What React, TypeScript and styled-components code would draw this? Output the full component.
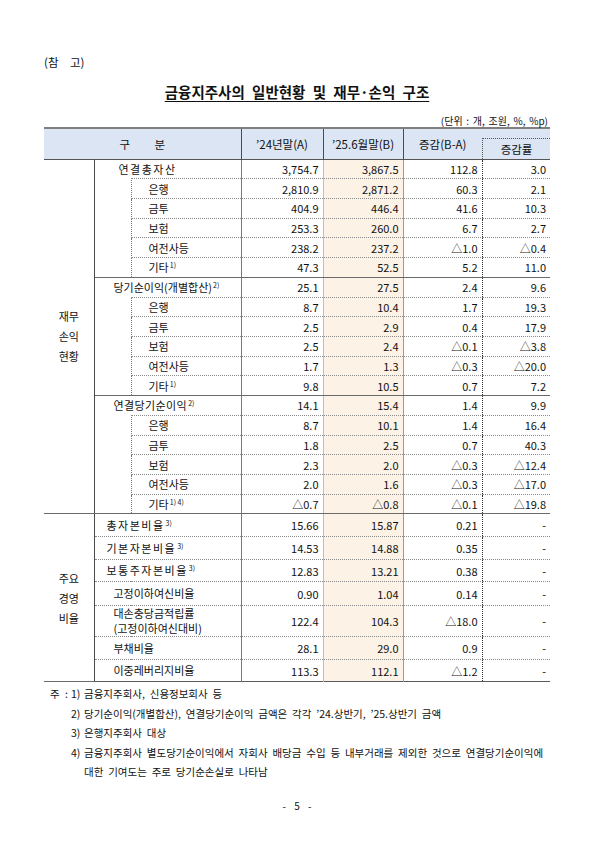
import React from "react";
import styled, { createGlobalStyle } from "styled-components";

const GlobalStyle = createGlobalStyle`
  html, body {
    margin: 0;
    padding: 0;
    background: #fff;
  }
  body {
    font-family: "Noto Sans CJK KR", "Noto Sans", sans-serif;
    color: #111;
  }
`;

const Page = styled.div`
  width: 595px;
  height: 841px;
  box-sizing: border-box;
  padding: 54px 45px 0 44px;
  background: #fff;
`;

const RefLabel = styled.div`
  font-size: 11.5px;
  line-height: 16px;
  word-spacing: 9px;
`;

const Title = styled.h1`
  margin: 12px 0 0;
  font-size: 14.5px;
  line-height: 20px;
  font-weight: 700;
  text-align: center;
  word-spacing: 4px;
  text-decoration: underline;
  text-underline-offset: 3px;
`;

const Unit = styled.div`
  margin-top: 13px;
  padding-right: 2px;
  font-size: 10px;
  line-height: 12px;
  text-align: right;
  word-spacing: 1.5px;
`;

const Table = styled.table`
  width: 506px;
  table-layout: fixed;
  border-collapse: collapse;
  border-top: 2px solid #808080;
  border-bottom: 1px solid #5a5a5a;
  font-size: 11px;
  line-height: 14px;
`;

const Col = styled.col<{ $w: number }>`
  width: ${(p) => p.$w}px;
`;

const HeadRow = styled.tr`
  height: 31px;
`;

const HeadCell = styled.th<{ $first?: boolean }>`
  padding: 0;
  background: #dbe5f3;
  font-weight: 400;
  font-size: 11.5px;
  white-space: nowrap;
  border-bottom: 1px solid #555;
  border-left: ${(p) => (p.$first ? "none" : "1px solid #4a4a4a")};
  word-spacing: ${(p) => (p.$first ? "22px" : "0")};
`;

const RateHead = styled(HeadCell)`
  border-left: none;
  vertical-align: bottom;
`;

const RateBox = styled.div`
  box-sizing: border-box;
  height: 21px;
  line-height: 20px;
  border-top: 1px dotted #555;
  border-left: 1px dotted #555;
`;

const BodyRow = styled.tr<{ $h: number }>`
  height: ${(p) => p.$h}px;
`;

type Line = "dot" | "solid" | "none";

const lineCss = (l: Line) =>
  l === "solid" ? "1px solid #6a6a6a" : l === "dot" ? "1px dotted #8a8a8a" : "none";

const Cat = styled.td`
  padding: 0;
  text-align: center;
  font-size: 11px;
  line-height: 20px;
  border-right: 1px solid #4a4a4a;
  border-bottom: 1px solid #6a6a6a;
`;

const GroupLabel = styled.td<{ $pad: number; $ls: number }>`
  padding: 0 0 0 ${(p) => p.$pad}px;
  white-space: nowrap;
  letter-spacing: ${(p) => p.$ls}px;
  border-bottom: none;
`;

const Indent = styled.td<{ $line: Line }>`
  padding: 0;
  border-bottom: ${(p) => lineCss(p.$line)};
`;

const SubLabel = styled.td<{ $first: boolean; $line: Line }>`
  padding: 0 0 0 17px;
  white-space: nowrap;
  border-left: 1px dotted #777;
  border-top: ${(p) => (p.$first ? "1px dotted #8a8a8a" : "none")};
  border-bottom: ${(p) => lineCss(p.$line)};
`;

const RatioLabel = styled.td<{ $pad: number; $ls: number; $line: Line }>`
  padding: 0 0 0 ${(p) => p.$pad}px;
  white-space: nowrap;
  letter-spacing: ${(p) => p.$ls}px;
  line-height: 15px;
  border-bottom: ${(p) => lineCss(p.$line)};
`;

const colLeft: Record<number, string> = {
  3: "1px solid #7a7a7a",
  4: "1px solid #c8beb0",
  5: "1px solid #9a9a9a",
  6: "1px dotted #333",
};

const NumCell = styled.td<{ $col: number; $line: Line }>`
  padding: 0 4px 0 0;
  text-align: right;
  white-space: nowrap;
  background: ${(p) => (p.$col === 4 ? "#fcf2e5" : "transparent")};
  border-left: ${(p) => colLeft[p.$col]};
  border-bottom: ${(p) => lineCss(p.$line)};
`;

const Sup = styled.sup`
  font-size: 7px;
  line-height: 0;
  vertical-align: 4px;
  letter-spacing: 0;
  margin-left: 1px;
`;

const Notes = styled.div`
  margin-top: 2px;
  font-size: 10.5px;
  line-height: 19.5px;
  word-spacing: 2.5px;
`;

const NoteRow = styled.div`
  display: grid;
  grid-template-columns: 27px 13px 1fr;
  white-space: nowrap;
`;

const NoteHead = styled.span`
  padding-left: 6px;
  word-spacing: 3px;
`;

const PageNum = styled.div`
  margin-top: 17px;
  font-size: 10px;
  line-height: 14px;
  text-align: center;
  word-spacing: 6px;
`;

type Vals = { a: string; b: string; d: string; r: string };
type Item = Vals & { label: string; sup?: string };
type Group = { head: Item; pad: number; ls: number; items: Item[] };
type Ratio = Vals & { label: string[]; sup?: string; pad: number; ls: number; h: number };

const groups: Group[] = [
  {
    head: { label: "연결총자산", a: "3,754.7", b: "3,867.5", d: "112.8", r: "3.0" },
    pad: 24,
    ls: 1.5,
    items: [
      { label: "은행", a: "2,810.9", b: "2,871.2", d: "60.3", r: "2.1" },
      { label: "금투", a: "404.9", b: "446.4", d: "41.6", r: "10.3" },
      { label: "보험", a: "253.3", b: "260.0", d: "6.7", r: "2.7" },
      { label: "여전사등", a: "238.2", b: "237.2", d: "△1.0", r: "△0.4" },
      { label: "기타", sup: "1)", a: "47.3", b: "52.5", d: "5.2", r: "11.0" },
    ],
  },
  {
    head: { label: "당기순이익(개별합산)", sup: "2)", a: "25.1", b: "27.5", d: "2.4", r: "9.6" },
    pad: 19,
    ls: 0,
    items: [
      { label: "은행", a: "8.7", b: "10.4", d: "1.7", r: "19.3" },
      { label: "금투", a: "2.5", b: "2.9", d: "0.4", r: "17.9" },
      { label: "보험", a: "2.5", b: "2.4", d: "△0.1", r: "△3.8" },
      { label: "여전사등", a: "1.7", b: "1.3", d: "△0.3", r: "△20.0" },
      { label: "기타", sup: "1)", a: "9.8", b: "10.5", d: "0.7", r: "7.2" },
    ],
  },
  {
    head: { label: "연결당기순이익", sup: "2)", a: "14.1", b: "15.4", d: "1.4", r: "9.9" },
    pad: 19,
    ls: 0.4,
    items: [
      { label: "은행", a: "8.7", b: "10.1", d: "1.4", r: "16.4" },
      { label: "금투", a: "1.8", b: "2.5", d: "0.7", r: "40.3" },
      { label: "보험", a: "2.3", b: "2.0", d: "△0.3", r: "△12.4" },
      { label: "여전사등", a: "2.0", b: "1.6", d: "△0.3", r: "△17.0" },
      { label: "기타", sup: "1) 4)", a: "△0.7", b: "△0.8", d: "△0.1", r: "△19.8" },
    ],
  },
];

const ratios: Ratio[] = [
  { label: ["총자본비율"], sup: "3)", pad: 12, ls: 1.5, h: 23, a: "15.66", b: "15.87", d: "0.21", r: "-" },
  { label: ["기본자본비율"], sup: "3)", pad: 12, ls: 1.5, h: 23, a: "14.53", b: "14.88", d: "0.35", r: "-" },
  { label: ["보통주자본비율"], sup: "3)", pad: 12, ls: 1.5, h: 22, a: "12.83", b: "13.21", d: "0.38", r: "-" },
  { label: ["고정이하여신비율"], pad: 19, ls: 0, h: 24, a: "0.90", b: "1.04", d: "0.14", r: "-" },
  { label: ["대손충당금적립률", "(고정이하여신대비)"], pad: 19, ls: 0, h: 31, a: "122.4", b: "104.3", d: "△18.0", r: "-" },
  { label: ["부채비율"], pad: 19, ls: 0, h: 23, a: "28.1", b: "29.0", d: "0.9", r: "-" },
  { label: ["이중레버리지비율"], pad: 19, ls: 0, h: 22, a: "113.3", b: "112.1", d: "△1.2", r: "-" },
];

const notes = [
  ["1)", "금융지주회사, 신용정보회사 등"],
  ["2)", "당기순이익(개별합산), 연결당기순이익 금액은 각각 ’24.상반기, ’25.상반기 금액"],
  ["3)", "은행지주회사 대상"],
  ["4)", "금융지주회사 별도당기순이익에서 자회사 배당금 수입 등 내부거래를 제외한 것으로 연결당기순이익에"],
];

const ROW_H = 19.72;

const Nums = ({ v, line }: { v: Vals; line: Line }) => (
  <>
    <NumCell $col={3} $line={line}>{v.a}</NumCell>
    <NumCell $col={4} $line={line}>{v.b}</NumCell>
    <NumCell $col={5} $line={line}>{v.d}</NumCell>
    <NumCell $col={6} $line={line}>{v.r}</NumCell>
  </>
);

export default function App() {
  return (
    <>
      <GlobalStyle />
      <Page>
        <RefLabel>(참 고)</RefLabel>
        <Title>금융지주사의 일반현황 및 재무·손익 구조</Title>
        <Unit>(단위 : 개, 조원, %, %p)</Unit>
        <Table>
          <colgroup>
            <Col $w={50} />
            <Col $w={37} />
            <Col $w={110} />
            <Col $w={82} />
            <Col $w={80} />
            <Col $w={79} />
            <Col $w={68} />
          </colgroup>
          <thead>
            <HeadRow>
              <HeadCell $first colSpan={3}>
                구 분
              </HeadCell>
              <HeadCell>’24년말(A)</HeadCell>
              <HeadCell>’25.6월말(B)</HeadCell>
              <HeadCell>증감(B-A)</HeadCell>
              <RateHead>
                <RateBox>증감률</RateBox>
              </RateHead>
            </HeadRow>
          </thead>
          <tbody>
            {groups.map((g, gi) => (
              <React.Fragment key={gi}>
                <BodyRow $h={ROW_H}>
                  {gi === 0 && (
                    <Cat rowSpan={18}>
                      재무
                      <br />
                      손익
                      <br />
                      현황
                    </Cat>
                  )}
                  <GroupLabel colSpan={2} $pad={g.pad} $ls={g.ls}>
                    {g.head.label}
                    {g.head.sup && <Sup>{g.head.sup}</Sup>}
                  </GroupLabel>
                  <Nums v={g.head} line="dot" />
                </BodyRow>
                {g.items.map((it, ii) => {
                  const line: Line = ii === g.items.length - 1 ? "solid" : "dot";
                  return (
                    <BodyRow key={ii} $h={ROW_H}>
                      {ii === 0 && <Indent rowSpan={5} $line="solid" />}
                      <SubLabel $first={ii === 0} $line={line}>
                        {it.label}
                        {it.sup && <Sup>{it.sup}</Sup>}
                      </SubLabel>
                      <Nums v={it} line={line} />
                    </BodyRow>
                  );
                })}
              </React.Fragment>
            ))}
            {ratios.map((r, ri) => {
              const line: Line = ri === ratios.length - 1 ? "none" : "dot";
              return (
                <BodyRow key={ri} $h={r.h}>
                  {ri === 0 && (
                    <Cat rowSpan={ratios.length}>
                      주요
                      <br />
                      경영
                      <br />
                      비율
                    </Cat>
                  )}
                  <RatioLabel colSpan={2} $pad={r.pad} $ls={r.ls} $line={line}>
                    {r.label.map((t, ti) => (
                      <React.Fragment key={ti}>
                        {ti > 0 && <br />}
                        {t}
                      </React.Fragment>
                    ))}
                    {r.sup && <Sup>{r.sup}</Sup>}
                  </RatioLabel>
                  <Nums v={r} line={line} />
                </BodyRow>
              );
            })}
          </tbody>
        </Table>
        <Notes>
          {notes.map(([n, t], i) => (
            <NoteRow key={n}>
              <NoteHead>{i === 0 ? "주 :" : ""}</NoteHead>
              <span>{n}</span>
              <span>
                {t}
                {i === 3 && (
                  <>
                    <br />
                    대한 기여도는 주로 당기순손실로 나타남
                  </>
                )}
              </span>
            </NoteRow>
          ))}
        </Notes>
        <PageNum>- 5 -</PageNum>
      </Page>
    </>
  );
}
